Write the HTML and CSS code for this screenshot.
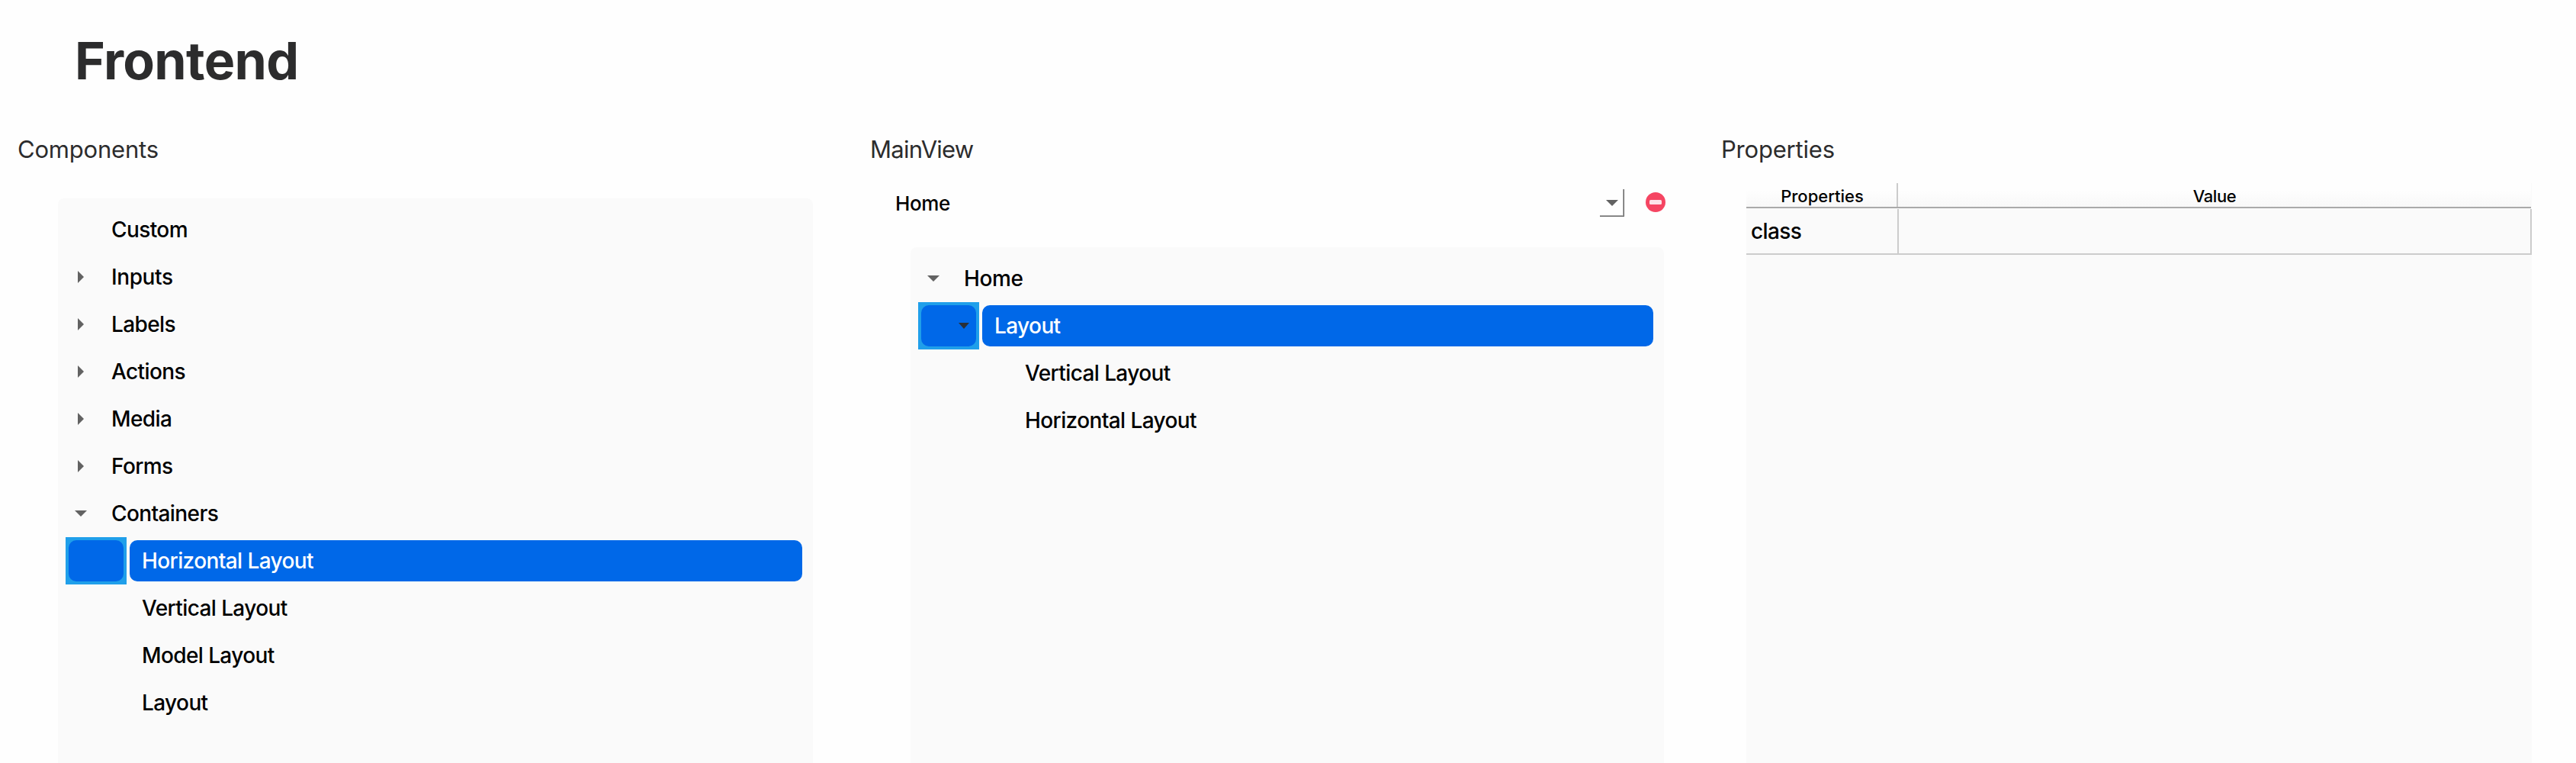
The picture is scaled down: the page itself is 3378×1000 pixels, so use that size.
FILE: index.html
```html
<!DOCTYPE html>
<html lang="en">
<head>
<meta charset="utf-8">
<title>Frontend</title>
<link rel="stylesheet" href="styles.css">
</head>
<body>
<h1 class="title">Frontend</h1>
<main class="columns">
  <section class="column components">
    <h2 class="heading">Components</h2>
    <div class="tree">
      <div class="row"><span class="branch"></span><span class="label">Custom</span></div>
      <div class="row"><span class="branch"><i class="arrow right"></i></span><span class="label short">Inputs</span></div>
      <div class="row"><span class="branch"><i class="arrow right"></i></span><span class="label">Labels</span></div>
      <div class="row"><span class="branch"><i class="arrow right"></i></span><span class="label">Actions</span></div>
      <div class="row"><span class="branch"><i class="arrow right"></i></span><span class="label">Media</span></div>
      <div class="row"><span class="branch"><i class="arrow right"></i></span><span class="label">Forms</span></div>
      <div class="row"><span class="branch"><i class="arrow down"></i></span><span class="label">Containers</span></div>
      <div class="row"><span class="focus"><span class="focus-fill"></span></span><span class="bar">Horizontal Layout</span></div>
      <div class="row child"><span class="label">Vertical Layout</span></div>
      <div class="row child"><span class="label">Model Layout</span></div>
      <div class="row child"><span class="label">Layout</span></div>
    </div>
  </section>
  <section class="column mainview">
    <h2 class="heading">MainView</h2>
    <div class="picker">
      <span class="picker-text">Home</span>
      <span class="picker-button"><i class="arrow down"></i></span>
      <svg class="remove" width="26" height="26" viewBox="0 0 26 26"><circle cx="13" cy="13" r="13" fill="#f54562"/><rect x="5" y="10" width="16" height="6" rx="1.5" fill="#fde3e8"/></svg>
    </div>
    <div class="tree">
      <div class="row"><span class="branch"><i class="arrow down"></i></span><span class="label short">Home</span></div>
      <div class="row"><span class="focus"><span class="focus-fill"><i class="arrow down small"></i></span></span><span class="bar">Layout</span></div>
      <div class="row grandchild"><span class="label">Vertical Layout</span></div>
      <div class="row grandchild"><span class="label">Horizontal Layout</span></div>
    </div>
  </section>
  <section class="column properties">
    <h2 class="heading">Properties</h2>
    <div class="table">
      <div class="table-head"><span class="head-name">Properties</span><span class="head-value">Value</span></div>
      <div class="table-row"><span class="cell-name">class</span><span class="cell-value"></span></div>
    </div>
  </section>
</main>
</body>
</html>
```
FILE: styles.css
```css
* { box-sizing: border-box; }
body {
  margin: 0;
  height: 1000px;
  overflow: hidden;
  display: flex;
  flex-direction: column;
  background: #fefefe;
  color: #000;
  font-family: Inter, "Liberation Sans", sans-serif;
  font-size: 28px;
  font-weight: 450;
  letter-spacing: -0.6px;
}
.title {
  margin: 0;
  height: 160px;
  padding-left: 98px;
  font-size: 68px;
  line-height: 159px;
  font-weight: 700;
  letter-spacing: -0.65px;
  color: #2c2c2d;
}
.columns {
  flex: 1;
  display: grid;
  grid-template-columns: 1117px 1117px 1fr;
  min-height: 0;
}
.column { display: flex; flex-direction: column; }
.heading {
  margin: 0;
  padding-left: 23px;
  height: 72px;
  line-height: 72px;
  font-size: 31px;
  font-weight: 420;
  letter-spacing: -0.2px;
  color: #2c2c2d;
}
.mainview .heading { padding-left: 24px; letter-spacing: -0.75px; }

/* Trees */
.tree {
  flex: 1;
  padding: 10px 14px 0 10px;
  background: #fafafa;
  border-radius: 8px 8px 0 0;
}
.components .tree { width: 990px; margin: 28px 0 0 76px; }
.mainview .tree { width: 988px; margin-left: 77px; }
.row {
  display: flex;
  align-items: center;
  height: 62px;
  white-space: nowrap;
}
.short { letter-spacing: -0.4px; }
.branch { display: flex; width: 60px; padding-left: 12px; }
.child { padding-left: 100px; }
.grandchild { padding-left: 140px; }
.arrow { display: block; background: #626262; }
.right { width: 8px; height: 16px; margin-left: 4px; clip-path: polygon(0 0, 100% 50%, 0 100%); }
.down { width: 16px; height: 8px; clip-path: polygon(0 0, 100% 0, 50% 100%); }
.small { width: 14px; background: #2a3038; }
.focus {
  width: 80px;
  height: 62px;
  padding: 4px;
  background: #1f9fea;
}
.focus-fill {
  display: flex;
  align-items: center;
  justify-content: flex-end;
  height: 54px;
  padding-right: 9px;
  border-radius: 10px;
  background: #0068e8;
}
.bar {
  flex: 1;
  height: 54px;
  margin-left: 4px;
  padding-left: 16px;
  line-height: 54px;
  border-radius: 10px;
  background: #0068e8;
  color: #fff;
}

/* View picker */
.picker {
  display: flex;
  align-items: flex-start;
  width: 1067px;
  height: 92px;
  padding: 16px 0 0 57px;
}
.picker-text {
  flex: 1;
  font-size: 26px;
  line-height: 37px;
  letter-spacing: -0.4px;
}
.picker-button {
  width: 32px;
  height: 36px;
  padding: 14px 0 0 8px;
  border: solid #666;
  border-width: 0 1px 1px 0;
  box-shadow: inset -1px -1px #aaa;
}
.remove { margin: 4px 0 0 28px; }

/* Property table */
.table {
  flex: 1;
  width: 1030px;
  margin: 8px 0 0 56px;
  background: #fafafa;
}
.table-head {
  display: flex;
  height: 33px;
  margin-right: 1px;
  border-bottom: 2px solid #aaa;
  background: linear-gradient(#fefefe 30%, #f8f8f8);
  font-size: 22px;
  font-weight: 480;
  line-height: 34px;
  letter-spacing: 0;
  text-align: center;
}
.head-name { width: 199px; height: 31px; padding-left: 2px; border-right: 2px solid #ccc; }
.head-value { flex: 1; letter-spacing: -0.4px; }
.table-row {
  display: flex;
  height: 61px;
  padding-top: 1px;
  border-bottom: 2px solid #ccc;
  line-height: 58px;
}
.cell-name { width: 200px; padding-left: 6px; border-right: 2px solid #ccc; }
.cell-value { flex: 1; border-right: 2px solid #ccc; }
```
